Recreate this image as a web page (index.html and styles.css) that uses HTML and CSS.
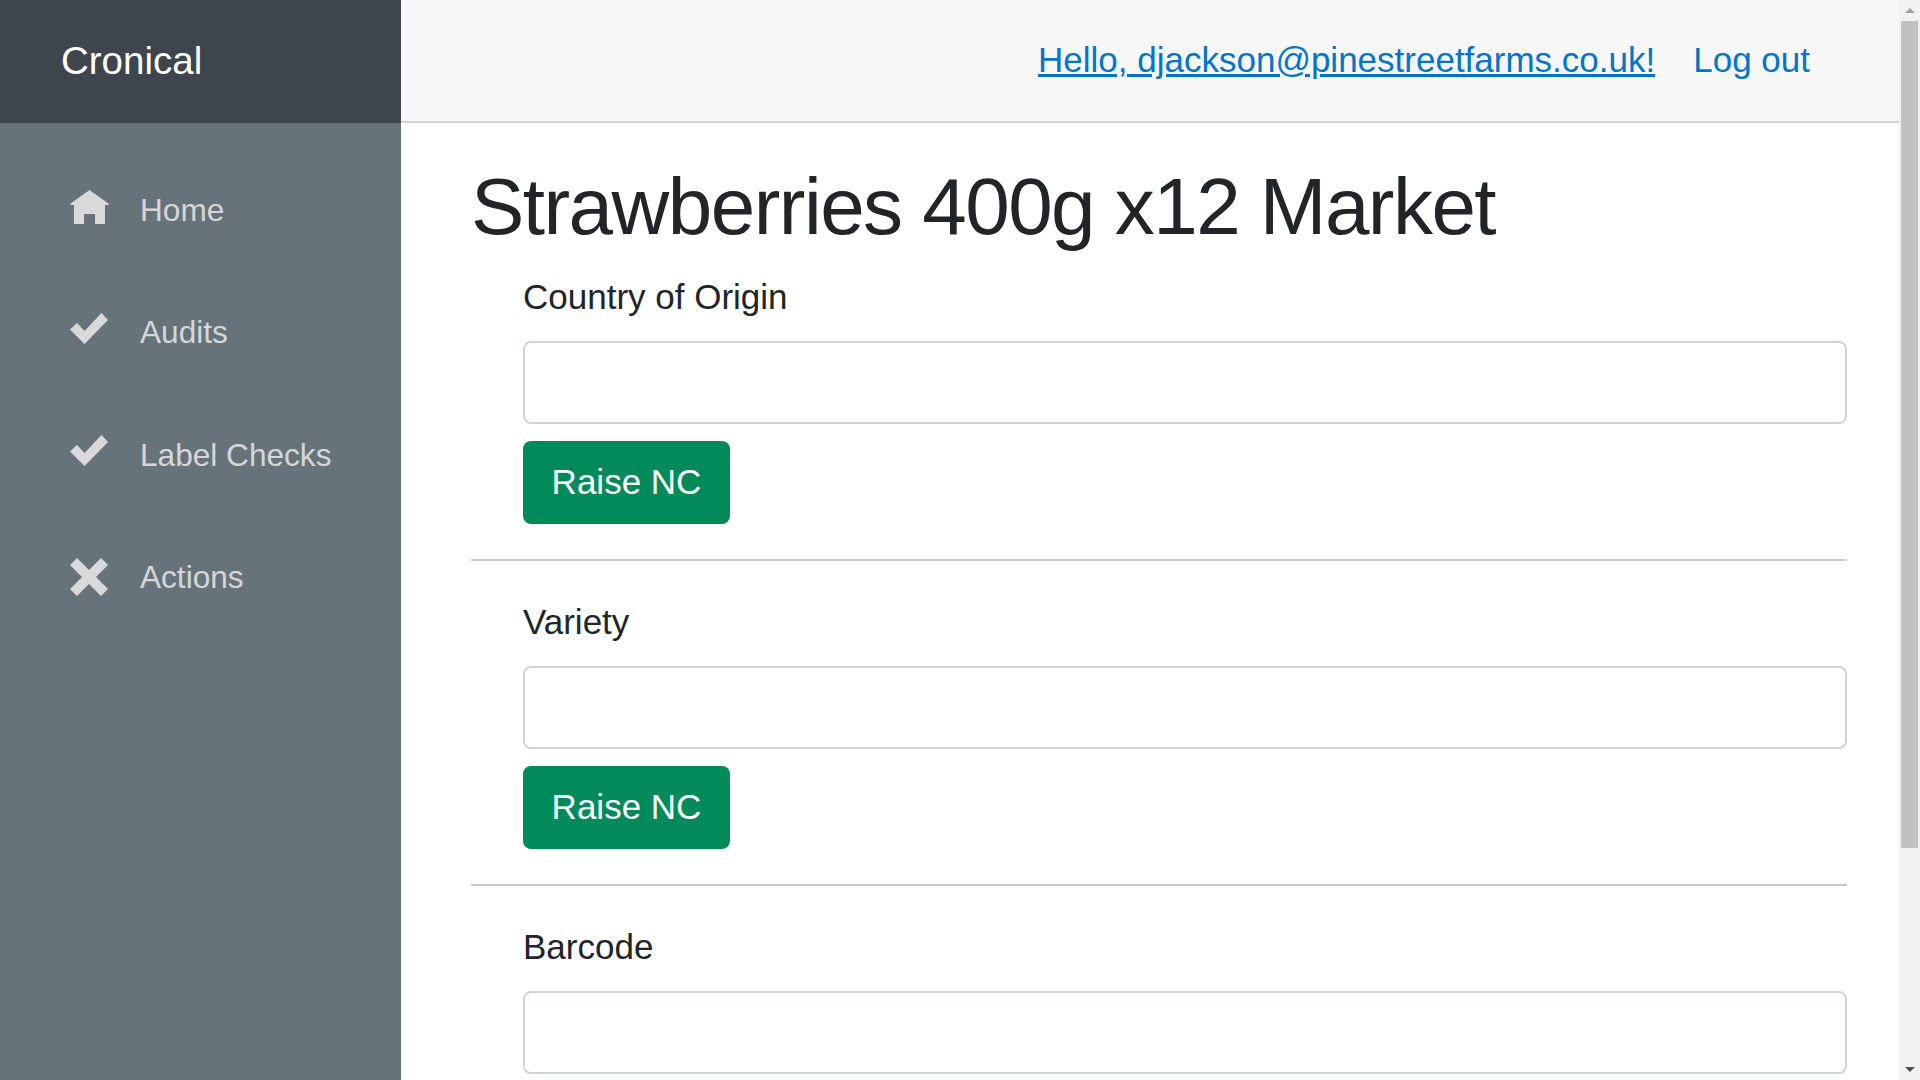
FILE: index.html
```html
<!DOCTYPE html>
<html lang="en">
<head>
<meta charset="utf-8">
<title>Cronical</title>
<link rel="stylesheet" href="styles.css">
</head>
<body>
<div class="app">
  <aside class="sidebar">
    <div class="brand">Cronical</div>
    <nav class="nav">
      <a class="nav-item" href="#">
        <svg class="nav-icon" viewBox="0 0 40 40"><path d="M19.5 0 L39 14 L38 15 H35 V34 H25 V24 H14 V34 H4 V15 H1 L0 14 Z"/></svg>
        <span>Home</span>
      </a>
      <a class="nav-item" href="#">
        <svg class="nav-icon" viewBox="0 0 40 40"><path d="M31.5 0 L38 7 L14.5 31 L0 16.5 L7 10 L14.5 18 Z"/></svg>
        <span>Audits</span>
      </a>
      <a class="nav-item" href="#">
        <svg class="nav-icon" viewBox="0 0 40 40"><path d="M31.5 0 L38 7 L14.5 31 L0 16.5 L7 10 L14.5 18 Z"/></svg>
        <span>Label Checks</span>
      </a>
      <a class="nav-item" href="#">
        <svg class="nav-icon" viewBox="0 0 40 40"><path d="M7 0 L19 12 L31 0 L38 7 L26 19 L38 31 L31 38 L19 26 L7 38 L0 31 L12 19 L0 7 Z"/></svg>
        <span>Actions</span>
      </a>
    </nav>
  </aside>
  <div class="main">
    <header class="topbar">
      <a class="user" href="#">Hello, djackson@pinestreetfarms.co.uk!</a>
      <a class="logout" href="#">Log out</a>
    </header>
    <main class="content">
      <h1 class="title">Strawberries 400g x12 Market</h1>
      <section class="field">
        <label class="field-label">Country of Origin</label>
        <input class="field-input" type="text">
        <button class="raise">Raise NC</button>
      </section>
      <hr class="rule">
      <section class="field">
        <label class="field-label">Variety</label>
        <input class="field-input" type="text">
        <button class="raise">Raise NC</button>
      </section>
      <hr class="rule">
      <section class="field">
        <label class="field-label">Barcode</label>
        <input class="field-input" type="text">
      </section>
    </main>
  </div>
  <div class="scrollbar">
    <div class="arrow-box"><span class="arrow-up"></span></div>
    <div class="track"><div class="thumb"></div></div>
    <div class="arrow-box"><span class="arrow-down"></span></div>
  </div>
</div>
</body>
</html>
```

FILE: styles.css
```css
* { box-sizing: border-box; }
html, body { margin: 0; height: 100%; overflow: hidden; }
body { font-family: "Liberation Sans", Arial, sans-serif; color: #212529; background: #fff; }
.app { display: flex; width: 1920px; height: 1080px; overflow: hidden; }
.sidebar { width: 401px; flex: none; background: #67737b; display: flex; flex-direction: column; }
.brand { height: 123px; flex: none; background: #3e454c; color: #fff; font-size: 38.5px; display: flex; align-items: center; padding: 0 0 2px 61px; }
.nav { display: flex; flex-direction: column; padding-top: 26px; }
.nav-item { height: 122.5px; display: flex; align-items: center; padding-left: 70px; color: #d6d6d6; font-size: 31.6px; text-decoration: none; }
.nav-icon { width: 40px; height: 40px; fill: #d9d9d9; margin-right: 30px; flex: none; }
.main { flex: 1; min-width: 0; display: flex; flex-direction: column; }
.topbar { height: 123px; flex: none; background: #f7f7f7; border-bottom: 2px solid #d3d3d3; display: flex; align-items: center; justify-content: flex-end; padding: 0 89px 1px 0; gap: 38px; font-size: 35px; }
.user { color: #0275c8; text-decoration: underline; }
.logout { color: #0275c8; text-decoration: none; }
.content { padding: 0 52px 0 70px; }
.title { font-size: 80px; letter-spacing: -1.54px; font-weight: 400; line-height: 1.2; margin: 36px 0 16px; color: #212529; }
.field { padding-left: 52px; display: flex; flex-direction: column; align-items: flex-start; }
.field-label { font-size: 35px; line-height: 52px; margin: 0 0 18px; }
.field-input { width: 100%; height: 83px; border: 2px solid #ced4da; border-radius: 8px; background: #fff; }
.raise { margin-top: 17px; width: 207px; height: 83px; border: 0; padding: 0 0 2px; border-radius: 8px; background: #028a5a; color: #fff; font: 35px "Liberation Sans", Arial, sans-serif; }
.rule { border: 0; border-top: 2px solid #c8c8c8; margin: 35px 0 35px; }
.scrollbar { width: 21px; flex: none; background: #f1f1f1; display: flex; flex-direction: column; }
.arrow-box { height: 21px; flex: none; display: flex; align-items: center; justify-content: center; }
.arrow-up { width: 0; height: 0; border: 5px solid transparent; border-top: 0; border-bottom: 5px solid #a3a3a3; }
.arrow-down { width: 0; height: 0; border: 5px solid transparent; border-bottom: 0; border-top: 5px solid #505050; }
.track { flex: 1; padding: 0 2px 0 2px; }
.thumb { height: 827px; background: #c1c1c1; }
```
